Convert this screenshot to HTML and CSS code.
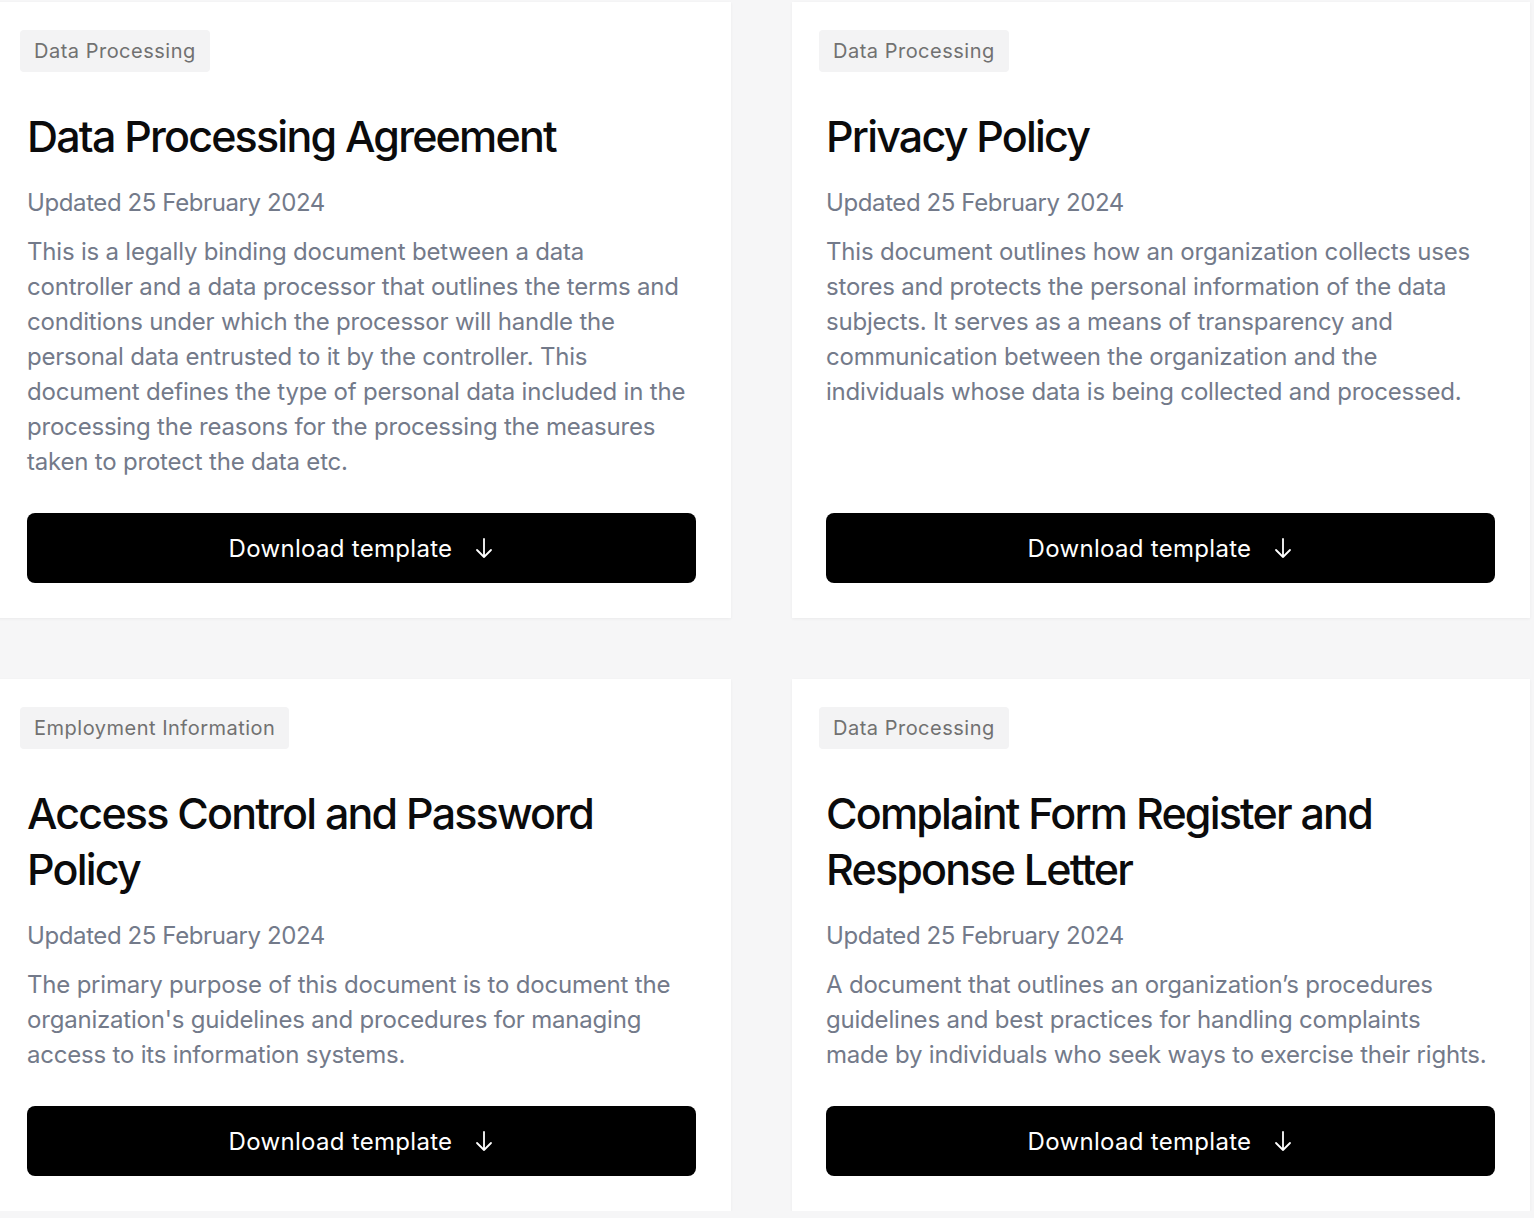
FILE: index.html
```html
<!DOCTYPE html>
<html lang="en">
<head>
<meta charset="utf-8">
<title>Templates</title>
<link rel="stylesheet" href="styles.css">
</head>
<body>
<main class="grid">
  <article class="card">
    <span class="tag">Data Processing</span>
    <h2 class="title">Data Processing Agreement</h2>
    <p class="date">Updated 25 February 2024</p>
    <p class="desc">This is a legally binding document between a data<br>controller and a data processor that outlines the terms and<br>conditions under which the processor will handle the<br>personal data entrusted to it by the controller. This<br>document defines the type of personal data included in the<br>processing the reasons for the processing the measures<br>taken to protect the data etc.</p>
    <button class="btn">Download template
      <svg class="arrow" width="20" height="22" viewBox="0 0 20 22" fill="none" stroke="currentColor" stroke-width="1.8" stroke-linecap="round" stroke-linejoin="round"><path d="M10 2v18M3 13l7 7 7-7"/></svg>
    </button>
  </article>
  <article class="card">
    <span class="tag">Data Processing</span>
    <h2 class="title">Privacy Policy</h2>
    <p class="date">Updated 25 February 2024</p>
    <p class="desc">This document outlines how an organization collects uses<br>stores and protects the personal information of the data<br>subjects. It serves as a means of transparency and<br>communication between the organization and the<br>individuals whose data is being collected and processed.</p>
    <button class="btn">Download template
      <svg class="arrow" width="20" height="22" viewBox="0 0 20 22" fill="none" stroke="currentColor" stroke-width="1.8" stroke-linecap="round" stroke-linejoin="round"><path d="M10 2v18M3 13l7 7 7-7"/></svg>
    </button>
  </article>
  <article class="card">
    <span class="tag">Employment Information</span>
    <h2 class="title">Access Control and Password Policy</h2>
    <p class="date">Updated 25 February 2024</p>
    <p class="desc">The primary purpose of this document is to document the<br>organization's guidelines and procedures for managing<br>access to its information systems.</p>
    <button class="btn">Download template
      <svg class="arrow" width="20" height="22" viewBox="0 0 20 22" fill="none" stroke="currentColor" stroke-width="1.8" stroke-linecap="round" stroke-linejoin="round"><path d="M10 2v18M3 13l7 7 7-7"/></svg>
    </button>
  </article>
  <article class="card">
    <span class="tag">Data Processing</span>
    <h2 class="title">Complaint Form Register and Response Letter</h2>
    <p class="date">Updated 25 February 2024</p>
    <p class="desc">A document that outlines an organization’s procedures<br>guidelines and best practices for handling complaints<br>made by individuals who seek ways to exercise their rights.</p>
    <button class="btn">Download template
      <svg class="arrow" width="20" height="22" viewBox="0 0 20 22" fill="none" stroke="currentColor" stroke-width="1.8" stroke-linecap="round" stroke-linejoin="round"><path d="M10 2v18M3 13l7 7 7-7"/></svg>
    </button>
  </article>
</main>
</body>
</html>
```
FILE: styles.css
```css
* { box-sizing: border-box; }
html, body {
  margin: 0;
  padding: 0;
  background: #f6f6f7;
  font-family: Inter, "Noto Sans", "Liberation Sans", sans-serif;
  overflow: hidden;
}
.grid {
  display: grid;
  grid-template-columns: 738px 738px;
  column-gap: 61px;
  row-gap: 61px;
  padding-top: 2px;
  margin-left: -7px;
}
.card {
  background: #ffffff;
  display: flex;
  flex-direction: column;
  align-items: flex-start;
  padding: 28px 35px 35px 34px;
  box-shadow: 0 1px 3px rgba(0,0,0,0.05);
}
.tag {
  margin-left: -7px;
  background: #f3f3f4;
  color: #717171;
  font-size: 20px;
  line-height: 42px;
  height: 42px;
  padding: 0 14px;
  border-radius: 4px;
  letter-spacing: 0.5px;
}
.title {
  margin: 36px 0 0;
  font-size: 43px;
  font-weight: 500;
  line-height: 56px;
  color: #0b0b0c;
  letter-spacing: -1.8px;
}
.date {
  margin: 21px 0 0;
  font-size: 24px;
  line-height: 35px;
  color: #737a8a;
  letter-spacing: -0.4px;
}
.desc {
  margin: 14px 0 34px;
  font-size: 24px;
  line-height: 35px;
  color: #737a8a;
  letter-spacing: -0.2px;
}
.btn {
  margin-top: auto;
  width: 100%;
  height: 70px;
  flex: none;
  border: 0;
  border-radius: 8px;
  background: #000;
  color: #fff;
  font-family: inherit;
  font-size: 24px;
  letter-spacing: 0.3px;
  display: flex;
  align-items: center;
  justify-content: center;
  gap: 22px;
  cursor: pointer;
}
.arrow { display: block; }
```
